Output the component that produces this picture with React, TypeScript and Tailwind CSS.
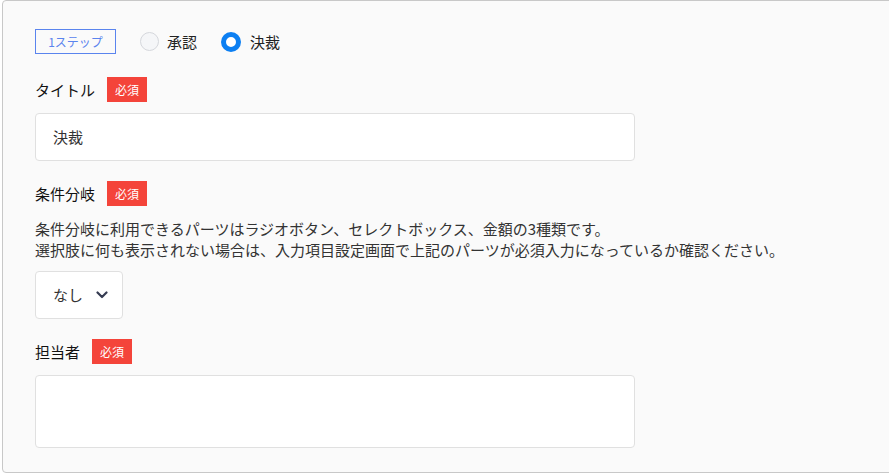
import React from "react";

const font = { fontFamily: '"Noto Sans CJK JP", "Noto Sans", sans-serif' };

function Badge() {
  return (
    <span className="flex h-[25px] w-[40px] items-center justify-center bg-[#f4443a] text-[12px] leading-none text-white">
      必須
    </span>
  );
}

function Label({ text }: { text: string }) {
  return (
    <div className="flex h-[25px] items-center gap-[12px]">
      <span className="text-[15px] font-normal leading-none text-[#111]">{text}</span>
      <Badge />
    </div>
  );
}

export default function App() {
  return (
    <div className="h-[474px] w-[889px] overflow-hidden bg-white" style={font}>
      <div className="ml-[2px] flex h-[473px] w-[900px] flex-col rounded-[4px] border border-[#c8c8c8] bg-[#fafafa] pl-[32px] pt-[28px]">
        <div className="flex h-[25px] items-center">
          <span className="flex h-[25px] w-[81px] items-center justify-center border border-[#5a84ee] text-[12px] leading-none text-[#5a84ee]">
            1ステップ
          </span>
          <span className="ml-[24px] h-[19px] w-[19px] rounded-full border border-[#d5d7dc] bg-[#f5f6f8]" />
          <span className="ml-[8px] text-[15px] leading-none text-[#222]">承認</span>
          <span className="ml-[24px] h-[20px] w-[20px] rounded-full border-[5px] border-[#0c7ff2] bg-white" />
          <span className="ml-[9px] text-[15px] leading-none text-[#222]">決裁</span>
        </div>

        <div className="mt-[23px]">
          <Label text="タイトル" />
        </div>
        <div className="mt-[11px] flex h-[48px] w-[600px] items-center rounded-[4px] border border-[#e0e0e0] bg-white pl-[17px] text-[15px] text-[#333]">
          決裁
        </div>

        <div className="mt-[20px]">
          <Label text="条件分岐" />
        </div>
        <div className="mt-[12px] text-[15px] leading-[21px] text-[#333]">
          <p>条件分岐に利用できるパーツはラジオボタン、セレクトボックス、金額の3種類です。</p>
          <p>選択肢に何も表示されない場合は、入力項目設定画面で上記のパーツが必須入力になっているか確認ください。</p>
        </div>
        <div className="mt-[11px] flex h-[48px] w-[88px] items-center rounded-[4px] border border-[#e0e0e0] bg-white pl-[17px] text-[15px] text-[#333]">
          <span>なし</span>
          <svg className="ml-[13px]" width="12" height="8" viewBox="0 0 12 8" fill="none">
            <path d="M1.5 1.5 L6 6 L10.5 1.5" stroke="#363c52" strokeWidth="2.2" strokeLinecap="round" strokeLinejoin="round" />
          </svg>
        </div>

        <div className="mt-[20px]">
          <Label text="担当者" />
        </div>
        <div className="mt-[11px] h-[73px] w-[600px] rounded-[4px] border border-[#e0e0e0] bg-white" />
      </div>
    </div>
  );
}
